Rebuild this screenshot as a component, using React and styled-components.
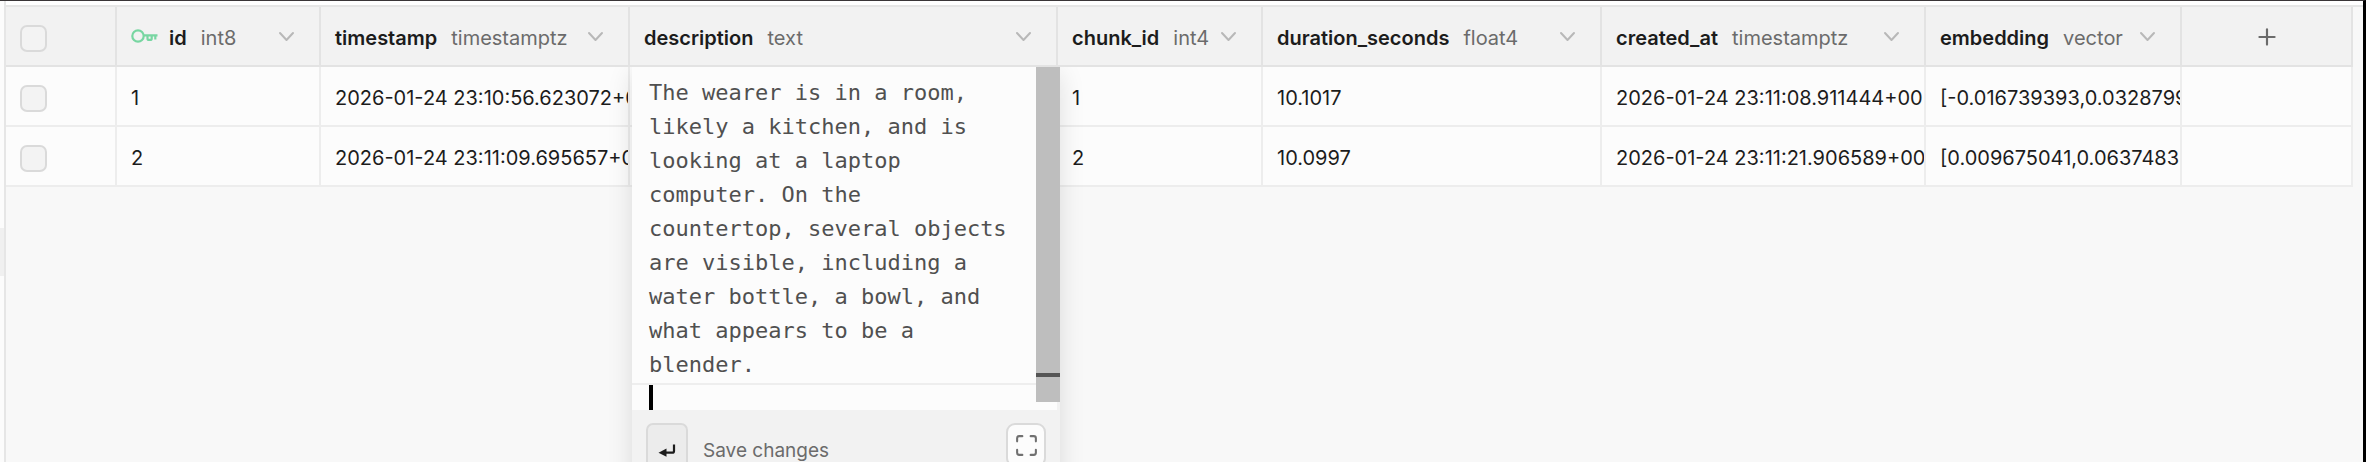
import React, { useState } from "react";
import styled, { createGlobalStyle } from "styled-components";
import { Maximize, Plus } from "lucide-react";

const GlobalStyle = createGlobalStyle`
  * {
    box-sizing: border-box;
  }
  body {
    margin: 0;
    color: #1c1c1c;
    background: #f8f8f8;
    font-family: Inter, "Liberation Sans", sans-serif;
    font-size: 20px;
    line-height: 28px;
  }
  button,
  textarea {
    font: inherit;
    color: inherit;
  }
`;

const Styled = {
  Window: styled.div`
    display: flex;
    height: 100vh;
    overflow: hidden;
    border-top: 1px solid #3a3638;
    border-right: 3px solid #000;
  `,
  Rail: styled.div`
    flex: none;
    width: 4px;
    padding-top: 227px;
    background: #fcfcfc;
  `,
  RailHandle: styled.div`
    height: 48px;
    background: #f0f0f0;
  `,
  Main: styled.main`
    flex: 1;
    min-width: 0;
    border-left: 2px solid #e6e6e6;
  `,
  TopBar: styled.div`
    height: 6px;
    background: #fff;
    border-bottom: 2px solid #e6e6e6;
  `,
  GridArea: styled.div`
    padding-right: 10px;
  `,
  Table: styled.table`
    width: 100%;
    table-layout: fixed;
    border-collapse: separate;
    border-spacing: 0;
  `,
  Col: styled.col`
    width: ${props => (props.$width ? `${props.$width}px` : "auto")};
  `,
  HeaderCell: styled.th`
    position: relative;
    z-index: 3;
    height: 60px;
    padding: 4px 20px 0 14px;
    text-align: left;
    font-weight: 400;
    white-space: nowrap;
    background: #f2f2f2;
    border-right: 2px solid #e3e3e3;
    border-bottom: 2px solid #e3e3e3;
  `,
  AddColumnCell: styled.th`
    position: relative;
    z-index: 3;
    padding: 2px 0 0;
    background: #f2f2f2;
    border-right: 2px solid #e3e3e3;
    border-bottom: 2px solid #e3e3e3;
  `,
  Cell: styled.td`
    position: relative;
    height: 60px;
    padding: ${props => (props.$editing ? "0" : "4px 0 0 14px")};
    overflow: ${props => (props.$editing ? "visible" : "hidden")};
    vertical-align: ${props => (props.$editing ? "top" : "middle")};
    white-space: nowrap;
    background: #fcfcfc;
    border-right: 2px solid #ededed;
    border-bottom: 2px solid #ededed;
  `,
  ColumnTitle: styled.div`
    display: flex;
    align-items: center;
    gap: 14px;
  `,
  KeySvg: styled.svg`
    flex: none;
    margin-right: -4px;
  `,
  ColumnName: styled.span`
    font-weight: 600;
  `,
  ColumnType: styled.span`
    flex: 1;
    color: #6b6b6b;
  `,
  IconButton: styled.button`
    display: flex;
    flex: none;
    align-items: center;
    justify-content: center;
    margin: ${props => (props.$centered ? "0 auto" : "0 0 0 -14px")};
    padding: 0;
    color: ${props => (props.$centered ? "#6b6b6b" : "#b8b8b8")};
    background: none;
    border: 0;
  `,
  Checkbox: styled.input`
    appearance: none;
    display: block;
    width: 27px;
    height: 27px;
    margin: 0;
    background: #f3f3f3;
    border: 2px solid #dadada;
    border-radius: 7px;

    &:checked {
      background: #3ecf8e;
    }
  `,
  Popover: styled.div`
    position: absolute;
    z-index: 2;
    top: 0;
    left: 2px;
    width: 428px;
    background: #fcfcfc;
    box-shadow: 0 6px 24px rgba(0, 0, 0, 0.12);
  `,
  Editor: styled.div`
    display: flex;
    height: 343px;
  `,
  EditorBody: styled.div`
    flex: 1;
    display: flex;
    flex-direction: column;
  `,
  EditorText: styled.textarea`
    display: block;
    width: 100%;
    height: 316px;
    padding: 9px 17px 0;
    resize: none;
    overflow: hidden;
    color: #505050;
    font-family: "DejaVu Sans Mono", "Liberation Mono", monospace;
    font-size: 22px;
    line-height: 34px;
    background: none;
    border: 0;
    outline: 0;
  `,
  CurrentLine: styled.div`
    flex: 1;
    padding-left: 17px;
    border-top: 2px solid #eeeeee;
  `,
  Caret: styled.div`
    width: 4px;
    height: 100%;
    background: #000;
  `,
  ScrollTrack: styled.div`
    width: 24px;
    border-right: 3px solid #f2f2f2;
  `,
  ScrollThumb: styled.div`
    width: 24px;
    height: 335px;
    padding-top: 306px;
    background: #bebebe;
  `,
  ScrollMark: styled.div`
    height: 4px;
    background: #555;
  `,
  Footer: styled.div`
    display: flex;
    align-items: flex-start;
    justify-content: space-between;
    padding: 13px 14px;
    background: #f2f2f2;
  `,
  SaveButton: styled.button`
    display: flex;
    align-items: center;
    gap: 15px;
    padding: 0;
    color: #6b6b6b;
    font-size: 19px;
    background: none;
    border: 0;
  `,
  KeyCap: styled.span`
    display: flex;
    align-items: center;
    justify-content: center;
    width: 42px;
    height: 56px;
    color: #1c1c1c;
    background: #ececec;
    border: 2px solid #dadada;
    border-radius: 7px;
  `,
  ExpandButton: styled.button`
    display: flex;
    align-items: center;
    justify-content: center;
    width: 40px;
    height: 44px;
    padding: 0;
    color: #707070;
    background: #fcfcfc;
    border: 2px solid #dadada;
    border-radius: 9px;
  `
};

const columns = [
  { name: "id", type: "int8", width: 204, primary: true },
  { name: "timestamp", type: "timestamptz", width: 309 },
  { name: "description", type: "text", width: 428 },
  { name: "chunk_id", type: "int4", width: 205 },
  { name: "duration_seconds", type: "float4", width: 339 },
  { name: "created_at", type: "timestamptz", width: 324 },
  { name: "embedding", type: "vector", width: 256 }
];

const rows = [
  {
    id: 1,
    timestamp: "2026-01-24 23:10:56.623072+00",
    chunk_id: 1,
    duration_seconds: "10.1017",
    created_at: "2026-01-24 23:11:08.911444+00",
    embedding: "[-0.016739393,0.0328799"
  },
  {
    id: 2,
    timestamp: "2026-01-24 23:11:09.695657+00",
    chunk_id: 2,
    duration_seconds: "10.0997",
    created_at: "2026-01-24 23:11:21.906589+00",
    embedding: "[0.009675041,0.0637483"
  }
];

const description =
  "The wearer is in a room, likely a kitchen, and is looking at a laptop computer. On the countertop, several objects are visible, including a water bottle, a bowl, and what appears to be a blender.";

const KeyIcon = () => (
  <Styled.KeySvg width="28" height="24" viewBox="0 0 28 24" fill="none" stroke="#78d6a2" strokeWidth="2.2">
    <circle cx="7" cy="10" r="5.7" />
    <path d="M12.7 9.3H26.5M24.3 9.3V13.5M16.5 9.3V12.4a1.5 1.5 0 0 0 1.5 1.5h1.2a1.5 1.5 0 0 0 1.5-1.5V9.3" />
  </Styled.KeySvg>
);

const ChevronIcon = () => (
  <svg width="24" height="24" viewBox="0 0 24 24" fill="none" stroke="currentColor" strokeWidth="2">
    <path d="M5 7L11.5 14L18 7" strokeLinecap="round" strokeLinejoin="round" />
  </svg>
);

const EnterIcon = () => (
  <svg width="18" height="14" viewBox="0 0 18 14">
    <path d="M0.5 8.7L8.5 4.6V12.8Z" fill="currentColor" />
    <path d="M7 8.7H14.2Q16 8.7 16 6.9V0.5" fill="none" stroke="currentColor" strokeWidth="2.2" />
  </svg>
);

const ColumnHeader = ({ column }) => (
  <Styled.HeaderCell scope="col">
    <Styled.ColumnTitle>
      {column.primary && <KeyIcon />}
      <Styled.ColumnName>{column.name}</Styled.ColumnName>
      <Styled.ColumnType>{column.type}</Styled.ColumnType>
      <Styled.IconButton type="button" aria-label={`${column.name} options`}>
        <ChevronIcon />
      </Styled.IconButton>
    </Styled.ColumnTitle>
  </Styled.HeaderCell>
);

const TextEditor = () => {
  const [value, setValue] = useState(description);

  return (
    <Styled.Popover>
      <Styled.Editor>
        <Styled.EditorBody>
          <Styled.EditorText
            aria-label="description"
            spellCheck={false}
            value={value}
            onChange={evt => setValue(evt.target.value)}
          />
          <Styled.CurrentLine>
            <Styled.Caret />
          </Styled.CurrentLine>
        </Styled.EditorBody>
        <Styled.ScrollTrack>
          <Styled.ScrollThumb>
            <Styled.ScrollMark />
          </Styled.ScrollThumb>
        </Styled.ScrollTrack>
      </Styled.Editor>
      <Styled.Footer>
        <Styled.SaveButton type="button">
          <Styled.KeyCap>
            <EnterIcon />
          </Styled.KeyCap>
          Save changes
        </Styled.SaveButton>
        <Styled.ExpandButton type="button" aria-label="Expand editor">
          <Maximize size={25} strokeWidth={2} />
        </Styled.ExpandButton>
      </Styled.Footer>
    </Styled.Popover>
  );
};

export default function App() {
  const [editing] = useState({ row: 1, column: "description" });

  return (
    <Styled.Window>
      <GlobalStyle />
      <Styled.Rail>
        <Styled.RailHandle />
      </Styled.Rail>
      <Styled.Main>
        <Styled.TopBar />
        <Styled.GridArea>
          <Styled.Table>
            <colgroup>
              <Styled.Col $width={111} />
              {columns.map(column => (
                <Styled.Col key={column.name} $width={column.width} />
              ))}
              <Styled.Col />
            </colgroup>
            <thead>
              <tr>
                <Styled.HeaderCell>
                  <Styled.Checkbox type="checkbox" aria-label="Select all rows" />
                </Styled.HeaderCell>
                {columns.map(column => (
                  <ColumnHeader key={column.name} column={column} />
                ))}
                <Styled.AddColumnCell>
                  <Styled.IconButton type="button" $centered aria-label="Add column">
                    <Plus size={26} strokeWidth={2} />
                  </Styled.IconButton>
                </Styled.AddColumnCell>
              </tr>
            </thead>
            <tbody>
              {rows.map(row => (
                <tr key={row.id}>
                  <Styled.Cell>
                    <Styled.Checkbox type="checkbox" aria-label={`Select row ${row.id}`} />
                  </Styled.Cell>
                  {columns.map(({ name }) => {
                    const isEditing = editing.row === row.id && editing.column === name;
                    return (
                      <Styled.Cell key={name} $editing={isEditing}>
                        {isEditing ? <TextEditor /> : row[name]}
                      </Styled.Cell>
                    );
                  })}
                  <Styled.Cell />
                </tr>
              ))}
            </tbody>
          </Styled.Table>
        </Styled.GridArea>
      </Styled.Main>
    </Styled.Window>
  );
}
